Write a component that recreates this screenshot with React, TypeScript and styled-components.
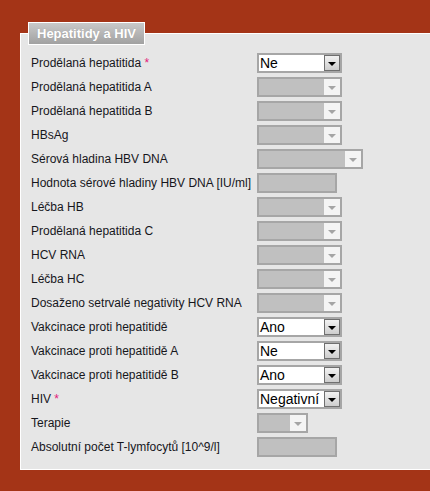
import React from 'react';
import styled, { createGlobalStyle } from 'styled-components';

const GlobalStyle = createGlobalStyle`
  html, body {
    margin: 0;
    padding: 0;
    background: #a43417;
    overflow: hidden;
  }
  body {
    font-family: 'Liberation Sans', Arial, sans-serif;
  }
`;

const Page = styled.div`
  width: 430px;
  min-height: 491px;
  padding: 22px 0 0 20px;
  box-sizing: border-box;
  overflow: hidden;
`;

const Fieldset = styled.fieldset`
  margin: 0 -12px 0 0;
  box-sizing: border-box;
  background: #e6e6e6;
  border: 1px solid #ffffff;
  padding: 0 0 10px 10px;
  min-inline-size: 0;
`;

const Legend = styled.legend`
  margin-left: -3px;
  padding: 0 8px;
  height: 21px;
  line-height: 21px;
  border: 1px solid #ffffff;
  background: linear-gradient(#c9c9c9, #a1a1a1);
  color: #ffffff;
  font-size: 13px;
  font-weight: bold;
  text-shadow: 0 0 1px rgba(0, 0, 0, 0.15);
`;

const Form = styled.div`
  display: grid;
  grid-template-columns: 226px auto;
  grid-auto-rows: 24px;
  align-items: center;
  padding-top: 6px;
`;

const Label = styled.span`
  font-size: 12px;
  color: #16161c;
  white-space: nowrap;
`;

const Required = styled.span`
  color: #e3207a;
`;

const SelectBox = styled.div<{ $w: number; $disabled?: boolean }>`
  width: ${(p) => p.$w}px;
  height: 20px;
  box-sizing: border-box;
  border: 2px solid #a6a6a6;
  background: ${(p) => (p.$disabled ? '#c0c0c0' : '#ffffff')};
  display: flex;
  align-items: stretch;
`;

const SelectValue = styled.span`
  flex: 1;
  padding-left: 1px;
  font-size: 14px;
  line-height: 16px;
  color: #000;
  overflow: hidden;
  white-space: nowrap;
`;

const DropButton = styled.span<{ $disabled?: boolean }>`
  width: 16px;
  flex: none;
  box-sizing: border-box;
  display: flex;
  align-items: center;
  justify-content: center;
  border: 1px solid ${(p) => (p.$disabled ? '#f4f4f4' : '#6f6f6f')};
  background: ${(p) => (p.$disabled ? '#f4f4f4' : 'linear-gradient(#f2f2f2, #cdcdcd)')};
`;

const Arrow = styled.span<{ $disabled?: boolean }>`
  width: 0;
  height: 0;
  margin-top: 1px;
  border-left: 4px solid transparent;
  border-right: 4px solid transparent;
  border-top: 4px solid ${(p) => (p.$disabled ? '#a5a5a5' : '#000000')};
`;

const InputBox = styled.div`
  width: 80px;
  height: 20px;
  box-sizing: border-box;
  border: 2px solid #a6a6a6;
  background: #c0c0c0;
`;

type Row = {
  label: string;
  required?: boolean;
  kind: 'select' | 'input';
  value?: string;
  width?: number;
};

const rows: Row[] = [
  { label: 'Prodělaná hepatitida', required: true, kind: 'select', value: 'Ne' },
  { label: 'Prodělaná hepatitida A', kind: 'select' },
  { label: 'Prodělaná hepatitida B', kind: 'select' },
  { label: 'HBsAg', kind: 'select' },
  { label: 'Sérová hladina HBV DNA', kind: 'select', width: 106 },
  { label: 'Hodnota sérové hladiny HBV DNA [IU/ml]', kind: 'input' },
  { label: 'Léčba HB', kind: 'select' },
  { label: 'Prodělaná hepatitida C', kind: 'select' },
  { label: 'HCV RNA', kind: 'select' },
  { label: 'Léčba HC', kind: 'select' },
  { label: 'Dosaženo setrvalé negativity HCV RNA', kind: 'select' },
  { label: 'Vakcinace proti hepatitidě', kind: 'select', value: 'Ano' },
  { label: 'Vakcinace proti hepatitidě A', kind: 'select', value: 'Ne' },
  { label: 'Vakcinace proti hepatitidě B', kind: 'select', value: 'Ano' },
  { label: 'HIV', required: true, kind: 'select', value: 'Negativní' },
  { label: 'Terapie', kind: 'select', width: 51 },
  { label: 'Absolutní počet T-lymfocytů [10^9/l]', kind: 'input' },
];

function Select({ value, width = 85 }: { value?: string; width?: number }) {
  const disabled = value === undefined;
  return (
    <SelectBox $w={width} $disabled={disabled}>
      <SelectValue>{value}</SelectValue>
      <DropButton $disabled={disabled}>
        <Arrow $disabled={disabled} />
      </DropButton>
    </SelectBox>
  );
}

export default function App() {
  return (
    <Page>
      <GlobalStyle />
      <Fieldset>
        <Legend>Hepatitidy a HIV</Legend>
        <Form>
          {rows.map((r) => (
            <React.Fragment key={r.label}>
              <Label>
                {r.label}
                {r.required && <Required> *</Required>}
              </Label>
              {r.kind === 'select' ? <Select value={r.value} width={r.width} /> : <InputBox />}
            </React.Fragment>
          ))}
        </Form>
      </Fieldset>
    </Page>
  );
}
